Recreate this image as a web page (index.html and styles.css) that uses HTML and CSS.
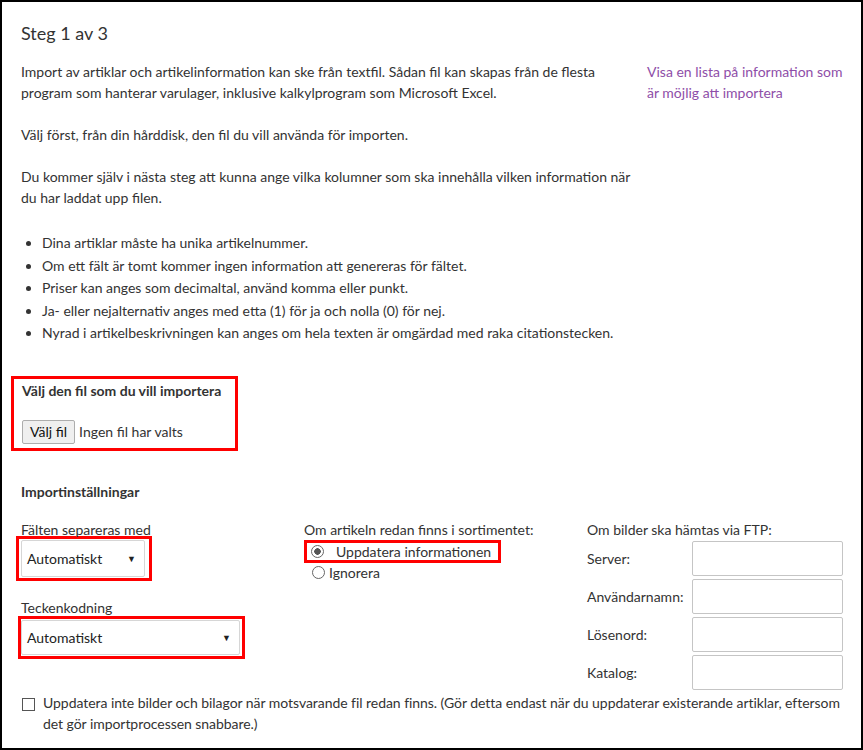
FILE: index.html
```html
<!DOCTYPE html>
<html>
<head>
    <meta charset="UTF-8">
    <title>Importera artiklar</title>
    <link rel="stylesheet" href="styles.css">
</head>
<body>
    <div class="page">
        <h1>Steg 1 av 3</h1>

        <div class="intro">
            <div class="intro-main">
                <p>Import av artiklar och artikelinformation kan ske från textfil. Sådan fil kan skapas från de flesta program som hanterar varulager, inklusive kalkylprogram som Microsoft Excel.</p>
                <p>Välj först, från din hårddisk, den fil du vill använda för importen.</p>
                <p>Du kommer själv i nästa steg att kunna ange vilka kolumner som ska innehålla vilken information när du har laddat upp filen.</p>
                <ul>
                    <li>Dina artiklar måste ha unika artikelnummer.</li>
                    <li>Om ett fält är tomt kommer ingen information att genereras för fältet.</li>
                    <li>Priser kan anges som decimaltal, använd komma eller punkt.</li>
                    <li>Ja- eller nejalternativ anges med etta (1) för ja och nolla (0) för nej.</li>
                    <li>Nyrad i artikelbeskrivningen kan anges om hela texten är omgärdad med raka citationstecken.</li>
                </ul>
            </div>
            <div class="intro-side">
                <a href="#">Visa en lista på information som är möjlig att importera</a>
            </div>
        </div>

        <div class="file-box mark">
            <h3>Välj den fil som du vill importera</h3>
            <div class="file-row">
                <span class="file-btn">Välj fil</span>
                <span>Ingen fil har valts</span>
            </div>
        </div>

        <h3 class="settings-title">Importinställningar</h3>

        <div class="settings">
            <div class="col col-1">
                <label>Fälten separeras med</label>
                <div class="mark sel-wrap sel-small">
                    <div class="select">Automatiskt <span class="arrow">&#9660;</span></div>
                </div>
                <label class="second">Teckenkodning</label>
                <div class="mark sel-wrap sel-wide">
                    <div class="select">Automatiskt <span class="arrow">&#9660;</span></div>
                </div>
            </div>

            <div class="col col-2">
                <label>Om artikeln redan finns i sortimentet:</label>
                <div class="mark radio-mark">
                    <span class="radio checked"></span>
                    <span class="radio-label">Uppdatera informationen</span>
                </div>
                <div class="radio-row">
                    <span class="radio"></span>
                    <span>Ignorera</span>
                </div>
            </div>

            <div class="col col-3">
                <label>Om bilder ska hämtas via FTP:</label>
                <div class="ftp">
                    <span>Server:</span><div class="input"></div>
                    <span>Användarnamn:</span><div class="input"></div>
                    <span>Lösenord:</span><div class="input"></div>
                    <span>Katalog:</span><div class="input"></div>
                </div>
            </div>
        </div>

        <div class="check-row">
            <span class="checkbox"></span>
            <span class="check-text">Uppdatera inte bilder och bilagor när motsvarande fil redan finns. (Gör detta endast när du uppdaterar existerande artiklar, eftersom det gör importprocessen snabbare.)</span>
        </div>
    </div>
</body>
</html>
```

FILE: styles.css
```css
html, body {
    margin: 0;
    padding: 0;
}

body {
    font-family: Lato, "Open Sans", sans-serif;
    font-size: 14px;
    color: #333;
    background: #fff;
}

.page {
    box-sizing: border-box;
    width: 863px;
    height: 750px;
    border: 2px solid #000;
    padding: 19px 14px 0 19px;
    overflow: hidden;
}

h1 {
    font-size: 18px;
    font-weight: normal;
    margin: 0;
    line-height: 24px;
}

.intro {
    display: flex;
    margin-top: 16px;
}

.intro-main {
    width: 620px;
}

.intro-main p {
    margin: 0 0 21px 0;
    line-height: 21px;
}

.intro-side {
    margin-left: 6px;
    width: 200px;
    line-height: 21px;
}

.intro-side a {
    color: #8e4ea8;
    text-decoration: none;
}

ul {
    margin: 24px 0 0 0;
    padding-left: 21px;
    line-height: 22.6px;
}

.mark {
    border: 3px solid #f00;
    box-sizing: border-box;
}

.file-box {
    width: 227px;
    margin: 31px 0 0 -10px;
    padding: 2px 8px 4px 8px;
}

h3 {
    font-size: 14px;
    font-weight: bold;
    margin: 0;
    line-height: 20px;
}

.file-row {
    margin-top: 19px;
    display: flex;
    align-items: center;
    gap: 4px;
}

.file-btn {
    border: 1px solid #adadad;
    background: #efefef;
    border-radius: 2px;
    padding: 2px 7px;
    line-height: 18px;
    color: #111;
}

.settings-title {
    margin-top: 31px;
}

.settings {
    display: flex;
    margin-top: 18px;
}

.col label {
    display: block;
    line-height: 20px;
}

.col-1 {
    width: 283px;
}

.col-2 {
    width: 283px;
}

.col-3 {
    flex: 1;
}

.sel-wrap {
    padding: 1px 4px 1px 2px;
    margin-left: -5px;
}

.sel-small {
    width: 136px;
    margin-top: -4px;
}

.sel-small .select {
    height: 37px;
}

.sel-wide {
    width: 227px;
    margin-left: -3px;
    margin-top: -2px;
    padding: 1px 2px 1px 0;
}

.sel-wide .select {
    height: 35px;
}

.second {
    margin-top: 17px;
}

.select {
    border: 1px solid #d6d6d6;
    border-radius: 2px;
    box-sizing: border-box;
    padding: 0 8px 0 5px;
    display: flex;
    align-items: center;
    justify-content: space-between;
    color: #222;
}

.arrow {
    font-size: 9px;
    color: #222;
}

.radio-mark {
    width: 197px;
    height: 23px;
    margin-top: 0;
    display: flex;
    align-items: center;
    padding-left: 4px;
}

.radio {
    box-sizing: border-box;
    width: 13px;
    height: 13px;
    border: 1px solid #666;
    border-radius: 50%;
    display: inline-block;
    flex-shrink: 0;
}

.radio.checked {
    background: radial-gradient(circle, #555 3px, #fff 3.5px);
}

.radio-label {
    margin-left: 12px;
}

.radio-row {
    display: flex;
    align-items: center;
    gap: 4px;
    margin-left: 8px;
    line-height: 20px;
}

.ftp {
    display: grid;
    grid-template-columns: 105px 151px;
    row-gap: 3px;
    align-items: center;
    margin-top: 1px;
}

.input {
    height: 35px;
    border: 1px solid #c5c5c5;
    border-radius: 2px;
    box-sizing: border-box;
}

.check-row {
    display: flex;
    align-items: flex-start;
    margin-top: 2px;
    padding-left: 1px;
}

.checkbox {
    box-sizing: border-box;
    width: 13px;
    height: 13px;
    border: 1px solid #555;
    margin-top: 6px;
    flex-shrink: 0;
}

.check-text {
    margin-left: 8px;
    line-height: 21px;
    font-size: 14px;
    letter-spacing: -0.05px;
}
```
